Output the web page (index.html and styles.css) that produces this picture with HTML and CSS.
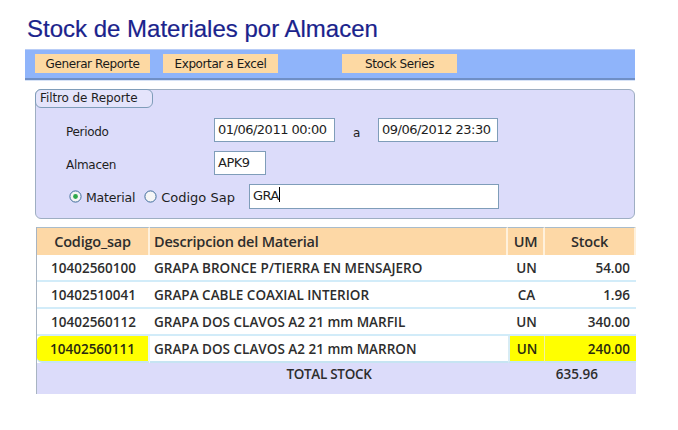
FILE: index.html
```html
<!DOCTYPE html>
<html lang="es">
<head>
<meta charset="utf-8">
<title>Stock de Materiales por Almacen</title>
<link rel="stylesheet" href="styles.css">
</head>
<body>
<div class="page">
  <h1 class="title">Stock de Materiales por Almacen</h1>

  <div class="toolbar">
    <button class="tbtn">Generar Reporte</button>
    <button class="tbtn">Exportar a Excel</button>
    <button class="tbtn tbtn-far">Stock Series</button>
  </div>

  <div class="filter">
    <div class="legend">Filtro de Reporte</div>
    <div class="frow">
      <span class="flabel">Periodo</span>
      <span class="input w-date">01/06/2011 00:00</span>
      <span class="sep-a">a</span>
      <span class="input w-date2">09/06/2012 23:30</span>
    </div>
    <div class="frow">
      <span class="flabel">Almacen</span>
      <span class="input w-alm">APK9</span>
    </div>
    <div class="frow">
      <span class="radio">
        <svg width="13" height="13" viewBox="0 0 13 13"><circle cx="6.5" cy="6.5" r="5.6" fill="#f4f4f4" stroke="#3f6c9a" stroke-width="1"/><circle cx="6.5" cy="6.5" r="2.4" fill="#2fa84a"/></svg>
        <span class="rlabel">Material</span>
      </span>
      <span class="radio">
        <svg width="13" height="13" viewBox="0 0 13 13"><circle cx="6.5" cy="6.5" r="5.6" fill="#f6f6f6" stroke="#3f6c9a" stroke-width="1"/></svg>
        <span class="rlabel">Codigo Sap</span>
      </span>
      <span class="input w-search">GRA<span class="caret"></span></span>
    </div>
  </div>

  <table class="grid">
    <thead>
      <tr>
        <th class="c-code">Codigo_sap</th>
        <th class="c-desc">Descripcion del Material</th>
        <th class="c-um">UM</th>
        <th class="c-stock">Stock</th>
      </tr>
    </thead>
    <tbody>
      <tr>
        <td class="c-code">10402560100</td>
        <td class="c-desc">GRAPA BRONCE P/TIERRA EN MENSAJERO</td>
        <td class="c-um">UN</td>
        <td class="c-stock">54.00</td>
      </tr>
      <tr>
        <td class="c-code">10402510041</td>
        <td class="c-desc">GRAPA CABLE COAXIAL INTERIOR</td>
        <td class="c-um">CA</td>
        <td class="c-stock">1.96</td>
      </tr>
      <tr>
        <td class="c-code">10402560112</td>
        <td class="c-desc">GRAPA DOS CLAVOS A2 21 mm MARFIL</td>
        <td class="c-um">UN</td>
        <td class="c-stock">340.00</td>
      </tr>
      <tr class="sel">
        <td class="c-code hl hl-first">10402560111</td>
        <td class="c-desc">GRAPA DOS CLAVOS A2 21 mm MARRON</td>
        <td class="c-um hl">UN</td>
        <td class="c-stock hl">240.00</td>
      </tr>
    </tbody>
    <tfoot>
      <tr>
        <td></td>
        <td class="t-label">TOTAL STOCK</td>
        <td></td>
        <td class="t-value">635.96</td>
      </tr>
    </tfoot>
  </table>
</div>
</body>
</html>
```

FILE: styles.css
```css
* { box-sizing: border-box; }
html, body { margin: 0; padding: 0; background: #ffffff; }
body { font-family: "Liberation Sans", Arial, sans-serif; color: #1e1e1e; }

.page {
  padding: 16px 0 0 25px;
  width: 678px;
}

.title {
  margin: 0 0 7px 2px;
  font-family: "Liberation Sans", Arial, sans-serif;
  font-weight: normal;
  font-size: 24px;
  line-height: 26px;
  color: #1a238c;
  -webkit-text-stroke: 0.2px #1a238c;
}

.toolbar {
  width: 610px;
  height: 31px;
  background: #8fb4fa;
  border-top: 1px solid #b9cdf6;
  border-bottom: 2px solid #6f8fc6;
  box-shadow: 0 1px 0 #d6e2f6;
  display: flex;
  align-items: flex-start;
  gap: 13px;
  padding: 4px 0 0 10px;
}
.tbtn {
  width: 115px;
  height: 19px;
  border: none;
  background: #fdd9a3;
  font-family: "DejaVu Sans", Tahoma, sans-serif;
  font-size: 12px;
  color: #1a1a1a;
  padding: 0;
  letter-spacing: -0.4px;
}
.tbtn-far { margin-left: 51px; }

.filter {
  margin: 9px 0 0 10px;
  width: 600px;
  height: 130px;
  background: #dcdcfa;
  border: 1px solid #9eaec2;
  border-radius: 6px;
  padding: 0 0 0 30px;
}
.legend {
  margin-left: -31px;
  margin-top: -1px;
  width: 118px;
  height: 19px;
  border: 1px solid #7f9db9;
  border-radius: 6px;
  background: #e4e4fb;
  font-family: "DejaVu Sans", Tahoma, sans-serif;
  font-size: 12px;
  letter-spacing: -0.1px;
  line-height: 17px;
  padding-left: 4px;
  color: #1e1e1e;
  margin-bottom: 10px;
  white-space: nowrap;
}
.frow {
  display: flex;
  align-items: center;
  height: 24px;
  margin-bottom: 9px;
  font-family: "DejaVu Sans", Tahoma, sans-serif;
  font-size: 12px;
  letter-spacing: -0.3px;
}
.frow:last-child { height: 25px; margin-bottom: 0; }
.flabel { width: 148px; padding-top: 4px; }
.input {
  height: 24px;
  background: #ffffff;
  border: 1px solid #7f9db9;
  padding: 0 0 0 3px;
  line-height: 22px;
  font-family: "DejaVu Sans", Tahoma, sans-serif;
  font-size: 13px;
  letter-spacing: -0.5px;
  color: #1e1e1e;
  white-space: nowrap;
}
.w-date { width: 121px; }
.w-date2 { width: 120px; }
.w-alm { width: 52px; }
.w-search { width: 250px; height: 25px; margin-left: 14px; }
.sep-a { width: 43px; text-align: center; padding-top: 6px; }
.caret {
  display: inline-block;
  width: 1px;
  height: 15px;
  background: #000;
  vertical-align: -2px;
}
.radio { display: inline-flex; align-items: center; gap: 4px; margin-left: 3px; }
.radio + .radio { margin-left: 9px; }
.rlabel { padding-top: 1px; font-size: 12.5px; letter-spacing: -0.2px; }
.radio + .radio .rlabel { font-size: 13px; letter-spacing: 0; }

.grid {
  margin: 8px 0 0 11px;
  width: 599px;
  border-collapse: separate;
  border-spacing: 0;
  border-left: 1px solid #a8b4c2;
  font-family: "Open Sans", "Noto Sans", sans-serif;
  color: #2d2d2d;
  table-layout: fixed;
}
.grid th, .grid td { padding: 0; white-space: nowrap; overflow: hidden; }
.grid thead th {
  height: 28px;
  background: #fdd8a6;
  border-top: 1px solid #a9bccb;
  border-right: 2px solid #fff1dc;
  font-size: 14.5px;
  font-weight: 600;
  letter-spacing: -0.2px;
  text-align: center;
}
.grid thead th.c-desc { text-align: left; padding-left: 4px; }
.c-code { width: 113px; }
.c-desc { width: 358px; }
.c-um { width: 37px; }
.c-stock { width: 91px; }

.grid tbody td {
  height: 27px;
  background: #ffffff;
  border-bottom: 2px solid #d2ecf9;
  font-size: 13.5px;
  font-weight: 600;
  letter-spacing: 0;
}
.grid tbody td.c-code { text-align: center; }
.grid tbody td.c-desc { padding-left: 4px; }
.grid tbody td.c-um { text-align: center; }
.grid tbody td.c-stock { text-align: right; padding-right: 6px; }
.grid tbody tr.sel td { border-bottom: 2px solid #c6e4f2; }
.grid tbody td.hl { background: #ffff00; color: #2a2a10; }
.grid tbody td.hl-first { border-radius: 5px 0 0 5px; border-right: 2px solid #e8f4fa; }
.grid tbody tr.sel td.c-um { border-left: 2px solid #d8ecf4; border-right: 1px solid #f2f2a0; }

.grid tfoot td {
  height: 31px;
  background: #dcdcfa;
  vertical-align: top;
  padding-top: 2px;
  font-size: 13.5px;
  font-weight: 600;
}
.grid tfoot td.t-label { text-align: center; letter-spacing: -0.3px; }
.grid tfoot td.t-value { text-align: right; padding-right: 38px; }
```
